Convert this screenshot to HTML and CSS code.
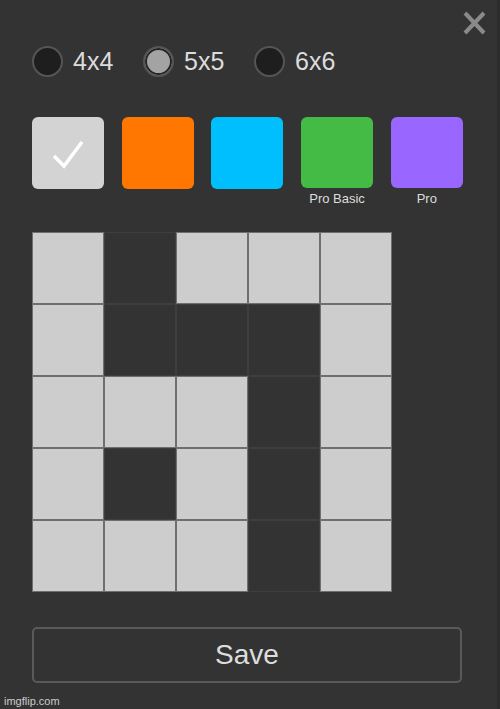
FILE: index.html
```html
<!DOCTYPE html>
<html lang="en">
<head>
  <meta charset="UTF-8">
  <title>Grid Editor</title>
  <link rel="stylesheet" href="styles.css">
</head>
<body>

  <div class="panel">
    <div class="top">
      <button class="close" aria-label="Close">
        <svg width="25" height="24" viewBox="0 0 25 24">
          <path d="M3 2 L22 22 M22 2 L3 22" stroke="#8a8a8a" stroke-width="4" stroke-linecap="butt"/>
        </svg>
      </button>
    </div>

    <div class="sizes">
      <label class="option"><span class="radio"></span>4x4</label>
      <label class="option"><span class="radio checked"></span>5x5</label>
      <label class="option"><span class="radio"></span>6x6</label>
    </div>

    <div class="swatches">
      <div class="swatch-item">
        <div class="swatch gray">
          <svg width="34" height="30" viewBox="0 0 34 30">
            <path d="M3 17 L13 27 L31 3" fill="none" stroke="#fff" stroke-width="3.5"/>
          </svg>
        </div>
      </div>
      <div class="swatch-item"><div class="swatch orange"></div></div>
      <div class="swatch-item"><div class="swatch blue"></div></div>
      <div class="swatch-item"><div class="swatch green"></div><span class="tag">Pro Basic</span></div>
      <div class="swatch-item"><div class="swatch purple"></div><span class="tag">Pro</span></div>
    </div>

    <div class="board">
      <div class="cell on"></div><div class="cell"></div><div class="cell on"></div><div class="cell on"></div><div class="cell on"></div>
      <div class="cell on"></div><div class="cell"></div><div class="cell"></div><div class="cell"></div><div class="cell on"></div>
      <div class="cell on"></div><div class="cell on"></div><div class="cell on"></div><div class="cell"></div><div class="cell on"></div>
      <div class="cell on"></div><div class="cell"></div><div class="cell on"></div><div class="cell"></div><div class="cell on"></div>
      <div class="cell on"></div><div class="cell on"></div><div class="cell on"></div><div class="cell"></div><div class="cell on"></div>
    </div>

    <button class="save">Save</button>
  </div>

  <div class="credit">imgflip.com</div>

</body>
</html>
```

FILE: styles.css
```css
body {
  margin: 0;
  height: 709px;
  background-color: #333333;
  border-right: 3px solid #2c2c2c;
  font-family: 'Liberation Sans', Arial, sans-serif;
  color: #dddddd;
  overflow: hidden;
}

.panel {
  padding-left: 32px;
}

.top {
  display: flex;
  justify-content: flex-end;
  padding: 11px 10px 0 0;
  height: 24px;
}

.close {
  background: none;
  border: none;
  padding: 0;
  width: 25px;
  height: 24px;
  cursor: pointer;
}

.close svg {
  display: block;
}

.sizes {
  display: flex;
  margin-top: 10px;
  height: 32px;
}

.option {
  display: flex;
  align-items: center;
  width: 111px;
  font-size: 25px;
  color: #dcdcdc;
}

.radio {
  box-sizing: border-box;
  width: 31px;
  height: 31px;
  border-radius: 50%;
  background-color: #1e1e1e;
  border: 2px solid #555555;
  margin-right: 10px;
}

.radio.checked {
  background-color: #a3a3a3;
  box-shadow: inset 0 0 0 2px #252525;
}

.swatches {
  display: flex;
  gap: 17.7px;
  margin-top: 40px;
  height: 89px;
}

.swatch-item {
  display: flex;
  flex-direction: column;
  align-items: center;
  width: 72px;
}

.swatch {
  width: 72px;
  height: 72px;
  border-radius: 6px;
  display: flex;
  align-items: center;
  justify-content: center;
}

.swatch svg {
  margin-top: 2px;
}

.gray { background-color: #d3d3d3; }
.orange { background-color: #ff7700; }
.blue { background-color: #00bfff; }
.green { background-color: #44bb44; }
.purple { background-color: #9966ff; }

.tag {
  font-size: 13px;
  line-height: 14px;
  margin-top: 4px;
  white-space: nowrap;
  color: #dddddd;
}

.board {
  display: grid;
  grid-template-columns: repeat(5, 72px);
  grid-auto-rows: 72px;
  width: 360px;
  margin-top: 26px;
}

.cell {
  box-sizing: border-box;
  border: 1px solid #3e3e3e;
  background-color: #333333;
}

.cell.on {
  background-color: #cdcdcd;
  border-color: #6e6e6e;
}

.save {
  display: block;
  box-sizing: border-box;
  width: 430px;
  height: 56px;
  margin-top: 35px;
  background: transparent;
  border: 2px solid #5a5a5a;
  border-radius: 5px;
  color: #dddddd;
  font-family: 'Liberation Sans', Arial, sans-serif;
  font-size: 28px;
  cursor: pointer;
}

.credit {
  margin: 12px 0 0 4px;
  font-size: 11px;
  color: #cccccc;
}
```
